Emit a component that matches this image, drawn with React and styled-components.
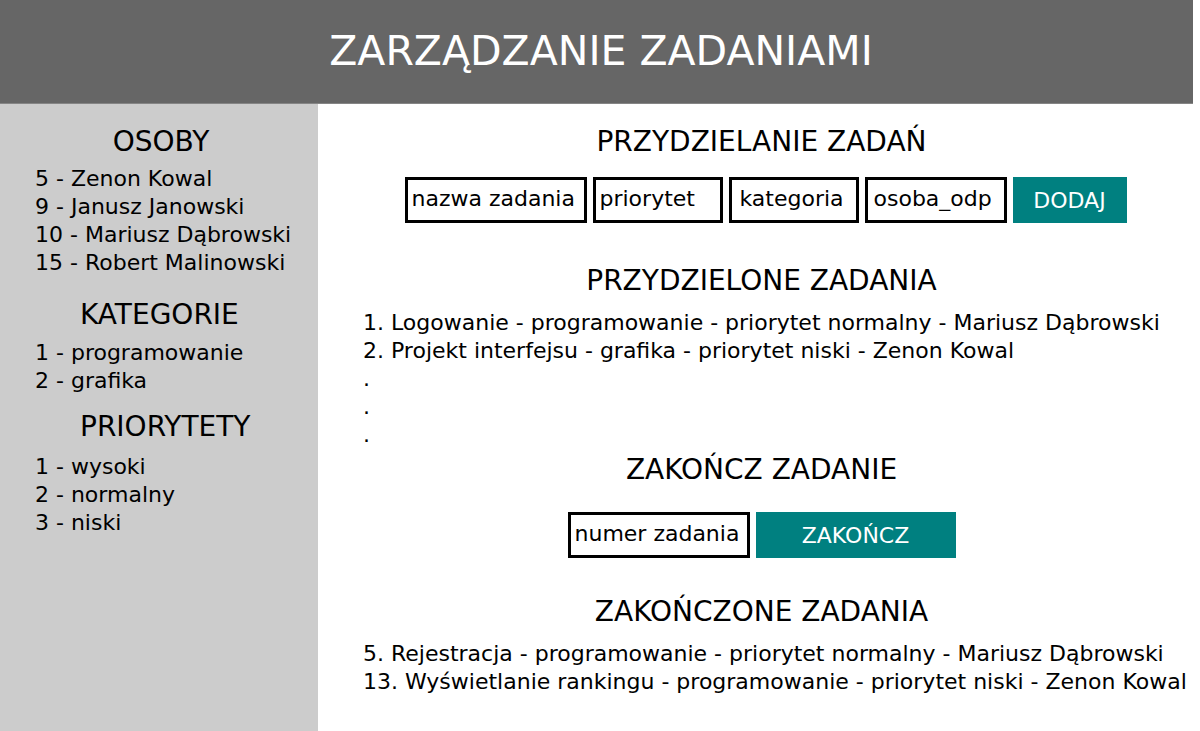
import React from 'react';
import styled, { createGlobalStyle } from 'styled-components';

const GlobalStyle = createGlobalStyle`
  *, *::before, *::after { box-sizing: border-box; }
  body {
    margin: 0;
    background: #fff;
    color: #000;
    font-family: "DejaVu Sans", Verdana, sans-serif;
    font-size: 22px;
    line-height: 28px;
    overflow-x: hidden;
  }
`;

const Page = styled.div`
  display: flex;
  flex-direction: column;
  min-height: 100vh;
`;

const Header = styled.header`
  display: flex;
  align-items: center;
  justify-content: center;
  margin-right: 7px;
  padding: 24px 0 24px 9px;
  background: #666;
  border-bottom: 1px solid #858585;
`;

const Title = styled.h1`
  margin: 0;
  color: #fff;
  font-size: 41px;
  font-weight: 400;
  line-height: 55px;
`;

const Body = styled.div`
  flex: 1;
  display: grid;
  grid-template-columns: 318px minmax(0, 1fr);
`;

const Sidebar = styled.aside`
  padding: 20px 0 20px 35px;
  background: #ccc;
`;

const Main = styled.main`
  padding: 20px 0 20px 5px;
`;

const Section = styled.section`
  margin-top: ${({ $space = 0 }) => $space}px;
`;

const Heading = styled.h2`
  margin: 0;
  font-size: 28px;
  font-weight: 400;
  line-height: 36px;
  text-align: ${({ $align = 'center' }) => $align};
`;

const SideHeading = styled(Heading)`
  padding: ${({ $align }) => ($align === 'left' ? '0 0 0 45px' : '0 31px 0 0')};
`;

const List = styled.ul`
  margin: ${({ $space }) => $space}px 0 0;
  padding: 0;
  list-style: none;
  white-space: nowrap;
`;

const TaskList = styled(List)`
  padding-left: 40px;
`;

const Form = styled.form`
  display: flex;
  flex-wrap: wrap;
  justify-content: center;
  gap: 6px;
  margin-top: ${({ $space }) => $space}px;
  padding-left: ${({ $inset = 0 }) => $inset}px;
`;

const Field = styled.input`
  width: ${({ $width }) => $width}px;
  height: 46px;
  padding: 0 0 4px ${({ $indent = 4 }) => $indent}px;
  border: 3px solid #000;
  border-radius: 0;
  background: #fff;
  color: #000;
  font: inherit;

  &::placeholder {
    color: #000;
    opacity: 1;
  }
`;

const Button = styled.button`
  width: ${({ $width }) => $width}px;
  height: 46px;
  padding: 2px 0 0;
  border: 0;
  background: #008080;
  color: #fff;
  font: inherit;
  cursor: pointer;
`;

const sideLists = [
  {
    title: 'OSOBY',
    space: 0,
    listSpace: 5,
    align: 'center',
    items: ['5 - Zenon Kowal', '9 - Janusz Janowski', '10 - Mariusz Dąbrowski', '15 - Robert Malinowski'],
  },
  { title: 'KATEGORIE', space: 20, listSpace: 6, align: 'left', items: ['1 - programowanie', '2 - grafika'] },
  { title: 'PRIORYTETY', space: 14, listSpace: 8, align: 'left', items: ['1 - wysoki', '2 - normalny', '3 - niski'] },
];

const assigned = [
  '1. Logowanie - programowanie - priorytet normalny - Mariusz Dąbrowski',
  '2. Projekt interfejsu - grafika - priorytet niski - Zenon Kowal',
  '.',
  '.',
  '.',
];

const finished = [
  '5. Rejestracja - programowanie - priorytet normalny - Mariusz Dąbrowski',
  '13. Wyświetlanie rankingu - programowanie - priorytet niski - Zenon Kowal',
];

const taskFields = [
  { name: 'nazwa zadania', width: 182 },
  { name: 'priorytet', width: 130 },
  { name: 'kategoria', width: 130, indent: 8 },
  { name: 'osoba_odp', width: 142, indent: 6 },
];

const keepPage = (event) => event.preventDefault();

export default function App() {
  return (
    <Page>
      <GlobalStyle />
      <Header>
        <Title>ZARZĄDZANIE ZADANIAMI</Title>
      </Header>
      <Body>
        <Sidebar>
          {sideLists.map(({ title, space, listSpace, align, items }) => (
            <Section key={title} $space={space}>
              <SideHeading $align={align}>{title}</SideHeading>
              <List $space={listSpace}>
                {items.map((item) => (
                  <li key={item}>{item}</li>
                ))}
              </List>
            </Section>
          ))}
        </Sidebar>
        <Main>
          <Section>
            <Heading>PRZYDZIELANIE ZADAŃ</Heading>
            <Form $space={17} $inset={8} onSubmit={keepPage}>
              {taskFields.map(({ name, width, indent }) => (
                <Field key={name} $width={width} $indent={indent} placeholder={name} aria-label={name} />
              ))}
              <Button type="submit" $width={114}>DODAJ</Button>
            </Form>
          </Section>
          <Section $space={40}>
            <Heading>PRZYDZIELONE ZADANIA</Heading>
            <TaskList $space={10}>
              {assigned.map((task, index) => (
                <li key={index}>{task}</li>
              ))}
            </TaskList>
          </Section>
          <Section $space={3}>
            <Heading>ZAKOŃCZ ZADANIE</Heading>
            <Form $space={24} onSubmit={keepPage}>
              <Field $width={182} placeholder="numer zadania" aria-label="numer zadania" />
              <Button type="submit" $width={200}>ZAKOŃCZ</Button>
            </Form>
          </Section>
          <Section $space={36}>
            <Heading>ZAKOŃCZONE ZADANIA</Heading>
            <TaskList $space={10}>
              {finished.map((task) => (
                <li key={task}>{task}</li>
              ))}
            </TaskList>
          </Section>
        </Main>
      </Body>
    </Page>
  );
}
